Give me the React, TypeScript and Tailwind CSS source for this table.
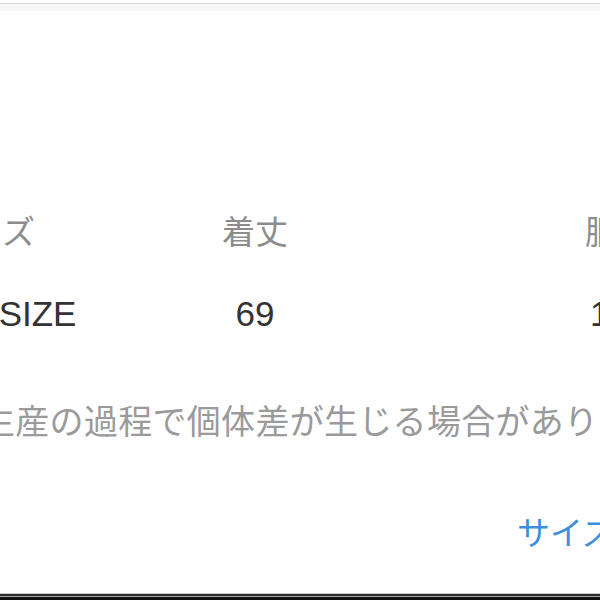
const font = "font-['Liberation_Sans','Noto_Sans_CJK_JP',sans-serif]";

const columns = [
  { label: "サイズ", value: "FREE SIZE", width: "w-[240px]" },
  { label: "着丈", value: "69", width: "w-[298px]" },
  { label: "胴囲", value: "110", width: "w-[428px]" },
];

export default function App() {
  return (
    <div className={`flex h-[600px] w-[600px] flex-col overflow-hidden bg-white ${font}`}>
      {/* top edge */}
      <div className="h-[3px] shrink-0 bg-white" />
      <div className="h-px shrink-0 bg-[#dcdcdc]" />
      <div className="h-[7px] shrink-0 bg-[#f8f8f8]" />

      {/* size table */}
      <div className="ml-[-134px] mt-[204px] flex shrink-0 whitespace-nowrap">
        {columns.map((c) => (
          <div key={c.label} className={`${c.width} shrink-0 text-center text-[33px] leading-[36px] text-[#8c8c8c]`}>
            {c.label}
          </div>
        ))}
      </div>
      <div className="ml-[-134px] mt-[45px] flex shrink-0 whitespace-nowrap">
        {columns.map((c) => (
          <div key={c.label} className={`${c.width} shrink-0 text-center text-[35px] leading-[36px] text-[#333333]`}>
            {c.value}
          </div>
        ))}
      </div>

      {/* note */}
      <p className="ml-[-19px] mt-[72px] shrink-0 whitespace-nowrap text-[34px] leading-[36px] tracking-[0.3px] text-[#9a9a9a]">
        生産の過程で個体差が生じる場合があります。
      </p>

      {/* link */}
      <p className="ml-[517px] mt-[76px] shrink-0 whitespace-nowrap text-[33px] leading-[36px] text-[#3b8fdc]">
        サイズガイド
      </p>

      <div className="flex-1" />

      {/* bottom edge */}
      <div className="h-px shrink-0 bg-[#cfcfcf]" />
      <div className="h-[2px] shrink-0 bg-[#2a2a2a]" />
      <div className="h-px shrink-0 bg-[#a8a8a8]" />
      <div className="h-[3px] shrink-0 bg-[#111111]" />
    </div>
  );
}
